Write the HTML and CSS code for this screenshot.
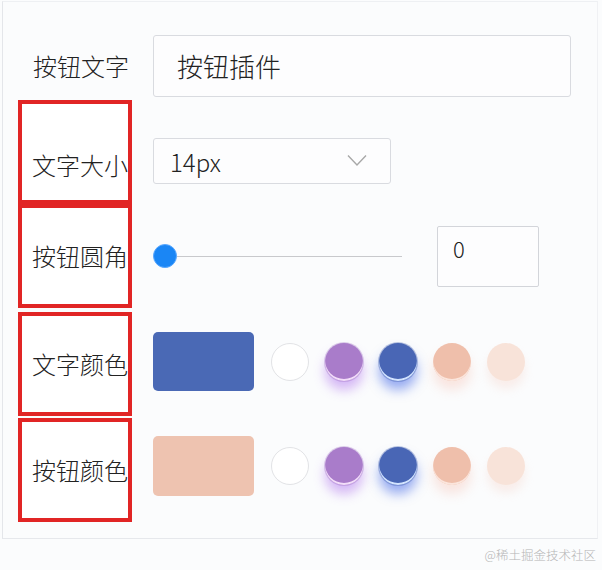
FILE: index.html
```html
<!DOCTYPE html>
<html lang="zh-CN">
<head>
<meta charset="utf-8">
<title>按钮插件设置</title>
<link rel="stylesheet" href="styles.css">
</head>
<body>
<div class="panel">
  <div class="row row-text">
    <div class="plain-label">按钮文字</div>
    <div class="text-input">按钮插件</div>
  </div>

  <div class="row box-row">
    <div class="label-box label-first"><span>文字大小</span></div>
    <div class="select ctl-first">
      <span>14px</span>
      <svg class="chevron" width="20" height="13" viewBox="0 0 20 13"><path d="M1 1.5 L10 11 L19 1.5" fill="none" stroke="#a8a8a8" stroke-width="1.4"/></svg>
    </div>
  </div>

  <div class="row box-row">
    <div class="label-box"><span>按钮圆角</span></div>
    <div class="slider">
      <div class="thumb"></div>
      <div class="track"></div>
    </div>
    <div class="num-input">0</div>
  </div>

  <div class="row box-row row-gap4">
    <div class="label-box"><span>文字颜色</span></div>
    <div class="colors ctl-mid">
      <div class="swatch swatch-blue"></div>
      <div class="dot dot-white"></div>
      <div class="dot dot-purple"></div>
      <div class="dot dot-blue"></div>
      <div class="dot dot-peach"></div>
      <div class="dot dot-light"></div>
    </div>
  </div>

  <div class="row box-row row-gap2">
    <div class="label-box"><span>按钮颜色</span></div>
    <div class="colors ctl-last">
      <div class="swatch swatch-peach"></div>
      <div class="dot dot-white"></div>
      <div class="dot dot-purple"></div>
      <div class="dot dot-blue"></div>
      <div class="dot dot-peach"></div>
      <div class="dot dot-light"></div>
    </div>
  </div>
</div>
<div class="watermark">@稀土掘金技术社区</div>
</body>
</html>
```

FILE: styles.css
```css
html, body {
  margin: 0;
  padding: 0;
}
body {
  width: 602px;
  height: 570px;
  overflow: hidden;
  background: #fbfcfd;
  font-family: "Noto Sans CJK SC", "Noto Sans", sans-serif;
  font-weight: 300;
  color: #222;
}
.panel {
  box-sizing: border-box;
  margin: 1px 4px 0 2px;
  height: 538px;
  border-top: 1px solid #eef0f3;
  border-left: 1px solid #e4e6ea;
  border-right: 1px solid #f0f1f4;
  border-bottom: 1px solid #e6e8ec;
  background: #fbfcfd;
  padding-top: 33px;
}
.row {
  display: flex;
  align-items: center;
}
.row-text {
  height: 62px;
  margin-bottom: 3px;
}
.plain-label {
  width: 120px;
  padding-left: 30px;
  font-size: 24px;
  line-height: 1;
}
.text-input {
  box-sizing: border-box;
  width: 418px;
  height: 62px;
  border: 1px solid #d9dbe0;
  border-radius: 3px;
  background: #fdfdfe;
  padding-left: 23px;
  font-size: 26px;
  line-height: 60px;
  color: #222;
}
.box-row {
  padding-left: 15px;
}
.row-gap4 { margin-top: 4px; }
.row-gap2 { margin-top: 2px; }
.label-box {
  box-sizing: border-box;
  width: 114px;
  height: 104px;
  margin-right: 21px;
  border: 4px solid #e12525;
  background: #fff;
  display: flex;
  align-items: center;
  padding-left: 10px;
  overflow: hidden;
  white-space: nowrap;
  font-size: 24px;
  line-height: 1;
}
.label-first {
  padding-top: 26px;
}
.ctl-first { margin-top: 18px; }
.ctl-mid { margin-top: -5px; }
.ctl-last { margin-top: -8px; }
.select {
  box-sizing: border-box;
  width: 238px;
  height: 46px;
  border: 1px solid #d9dbe0;
  border-radius: 3px;
  background: #fdfdfe;
  display: flex;
  align-items: center;
  justify-content: space-between;
  padding: 0 23px 0 16px;
  font-size: 24px;
  color: #222;
}
.chevron { margin-top: -2px; }
.slider {
  width: 249px;
  height: 24px;
  display: flex;
  align-items: center;
}
.thumb {
  width: 22px;
  height: 22px;
  border-radius: 50%;
  background: #1a86f5;
  border: 1px solid #5aa8ff;
  flex: none;
}
.track {
  flex: 1;
  height: 1px;
  background: #c8c9cc;
}
.num-input {
  box-sizing: border-box;
  width: 102px;
  height: 61px;
  margin-left: 35px;
  border: 1px solid #d3d5da;
  border-radius: 2px;
  background: #fdfdfe;
  padding: 8px 0 0 15px;
  font-size: 22px;
  line-height: 1.2;
  color: #222;
}
.colors {
  display: flex;
  align-items: center;
  gap: 16px;
}
.swatch {
  width: 101px;
  height: 59px;
  border-radius: 5px;
  margin-right: 1px;
}
.swatch-blue { background: #4a69b5; }
.swatch-peach { background: #eec3b0; height: 60px; }
.dot {
  box-sizing: border-box;
  width: 38px;
  height: 38px;
  border-radius: 50%;
  flex: none;
}
.dot-white {
  background: #fff;
  border: 1px solid #e2e3e6;
}
.dot-purple {
  background: #a97cca;
  box-shadow: 0 0 0 1px rgba(150, 100, 190, 0.3), inset 0 -2px 0 #f2ddf9, 0 9px 12px 0 rgba(165, 95, 235, 0.45);
}
.dot-blue {
  background: #4966b5;
  box-shadow: 0 0 0 1px rgba(60, 90, 170, 0.35), inset 0 -2px 0 #d3e4ff, 0 9px 12px 0 rgba(50, 90, 230, 0.5);
}
.dot-peach {
  background: #efbfab;
  box-shadow: inset 0 -2px 0 #fbe5dc, 0 9px 12px 0 rgba(245, 175, 155, 0.3);
}
.dot-light {
  background: #f8e3d9;
  box-shadow: 0 8px 10px 0 rgba(245, 200, 185, 0.28);
}
.watermark {
  text-align: right;
  padding-right: 6px;
  margin-top: 8px;
  font-size: 12.5px;
  color: #b5b5b5;
  line-height: 16px;
}
```
